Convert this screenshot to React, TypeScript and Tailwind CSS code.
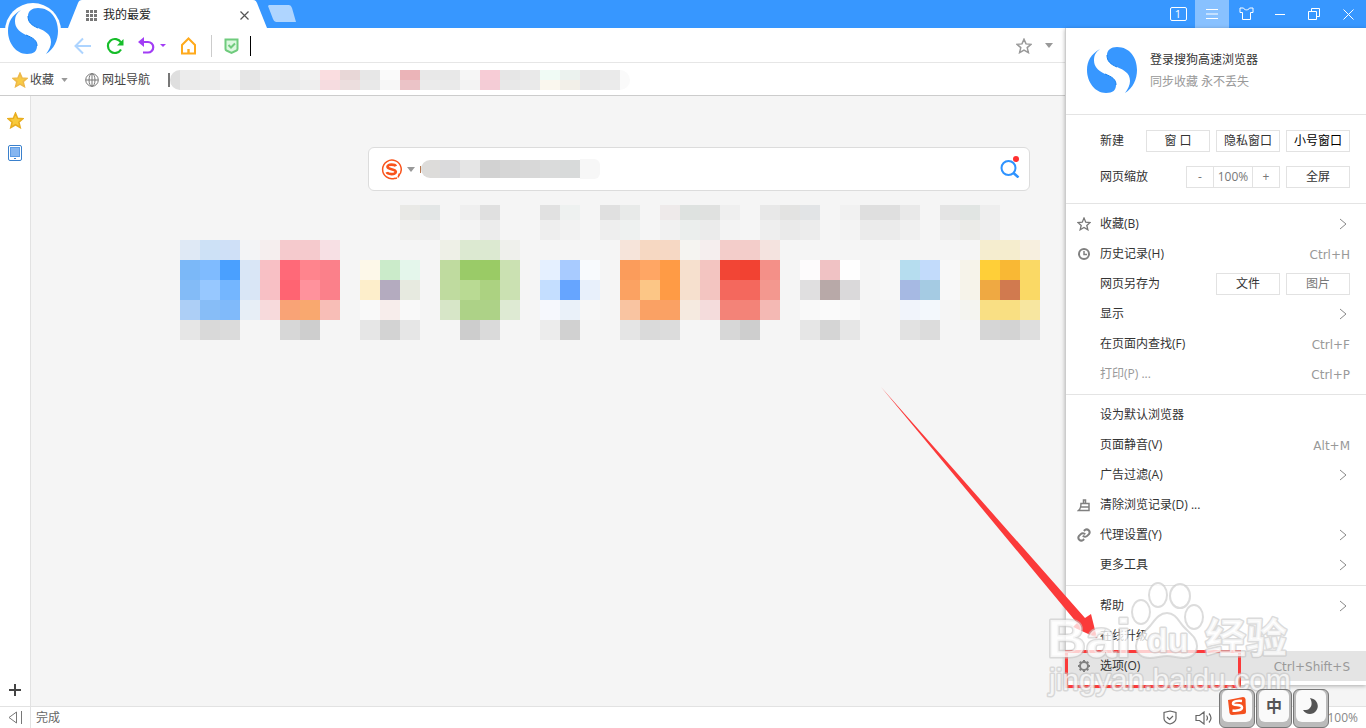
import type { ReactNode } from "react";

const tileRows = [
  "dfe9f5 cde1f6 cfe0f7 f3f4f6 f5eeee f5cacd f5cacd f7e0e4 . . . . . eef0e7 dce9d1 dce9d1 eff0ec . . . . . f6e4da f6d8c2 f6d8c4 f5f4f1 f5eeee f3cdca f3cdca f4e3df . . . . . . . . . . f5edcf f5edce f7efdf",
  "7bb8f8 7fbbff 4aa0ff d9e6f6 f8c0c5 ff6978 ff848d fb808a . fdf8e9 cbebca e4f6eb . bfdb9f 9acb68 9acb65 cbe1b2 . e5f0ff a8cbff f8fafd . fb9c5b ffa664 ff9b45 f6e0ce f3c5c1 f24535 f24232 f49088 . fdfbfc f0c2c4 fefefe . f7f7f7 b6ddef c2dbfb f8f8f8 f6f3ea ffcf38 f9b834 fad965",
  "83bbf7 97c8ff 74b6ff d9e6f6 f8c0c5 ff6472 ff929c fb808a . fdeecb b4abbf e7eae0 . bfdb9f b9da93 acd281 cbe1b2 . c4deff 66a5ff e8f0fb . fba262 fcc686 ff9b45 f6e0ce f3c5c1 f4685d f4685d f3988f . e0dfe0 b8a9a8 dad9da . f7f7f7 a6b9e3 a5cbe3 f8f8f8 f6f3ea efa942 d17a4f fad965",
  "adcff6 87bdf7 80bafa e7eef6 f7dadc f9a376 f9a86f f8beb7 . f9f9f9 f7edeb f9f9f9 . d7e6c8 add287 add287 deead3 . f6f8fd eaf1f9 f7f7f7 . f9c4a1 faa164 faa164 f5eae0 f4dcdc f38378 f38378 f4b9b4 . f9f9f9 fafafa f9f9f9 . . f1f4fb f3f8fc . f4f4f0 f9df84 f9df82 f7e6a0",
  "e6e6e6 d9d9d9 dbdbdb . . d7d7d7 cecece . . e6e6e6 d3d3d3 e6e6e6 . . cdcdcd dadada . . ececec d1d1d1 . . e5e5e5 dadada dcdcdc . . d7d7d7 cecece . . e6e6e6 d5d5d5 e6e6e6 . . e2e2e2 dcdcdc . . d6d6d6 d3d3d3 dedede",
];

const linkRows = [
  "e9e9e6 e3e6e6 . efefef e0e0e0 . . e1e1e1 eef1f0 . e0e0e0 e8eae9 . eeeaea dee2e0 e0e1e0 efefef . e8e8e8 e3e3e2 e2e4e6 . f1f1f1 dfdfdf dfdfdf e9e9e9 . e4e4e4 e1e5e3 eeeeee",
  "f0f0ee efefef . f3f3f3 ececec . . eeeeee f2f2f2 . eeeeee eef1f0 . f1f1f1 ebeeed ebebeb f3f3f3 . eeeeee eaeaea ececec . f3f3f3 ebebeb ebebeb f0f0f0 . eeeeee ebebe8 eeeeee",
];

const bookmarkRows = [
  "ececec eeeeee f8f8f8 e6e6e6 eeeeee ececec f1f1f1 fadde0 e8d7d7 e7e7e7 fafafa ebb4b8 e8e8e8 e8e8e8 f6f6f6 f7ccd6 e6e6e6 e9e9e9 f0fbf5 ebf2ee e9e9e9 eaeaea",
  "ebebeb ededed f1f1f1 e6e6e6 ebebeb ebebeb eeeeee f6dce0 ecdede e9e9e9 f7f7f7 ebc3c7 ebebeb eaeaea f3f3f3 f4ccd6 e8e8e8 eaeaea faf7ee f2efe8 e9e9e9 ebebeb",
];

function Cells({ row, size }: { row: string; size: string }) {
  return (
    <div className="flex">
      {row.split(" ").map((c, i) => (
        <span key={i} className={`shrink-0 ${size}`} style={{ backgroundColor: c === "." ? "transparent" : `#${c}` }} />
      ))}
    </div>
  );
}

function Logo() {
  return (
    <svg width="50" height="46" viewBox="0 0 50 46" fill="#3797ff">
      <path d="M13 2C4 7 0 14 0 23c0 12 8 23 19 23 7 0 10-3 10-8 0-6-4-8-11-11C10 23 7 19 7 13c0-5 2-8 6-11z" />
      <path d="M30 0c13 0 20 11 20 23 0 9-4 18-12 23 3-4 5-8 5-12 0-8-6-11-13-14-7-3-10-6-10-12 0-5 4-8 10-8z" />
      <path d="M20 8c0 6 3 9 10 12M29 38c0-6-4-8-11-11" fill="none" stroke="#1580ef" />
    </svg>
  );
}

function Caret({ className }: { className: string }) {
  return (
    <svg width="8" height="5" viewBox="0 0 8 5" className={className}>
      <path d="M0 0h8L4 5z" fill="currentColor" />
    </svg>
  );
}

function Chevron() {
  return (
    <svg width="8" height="12" viewBox="0 0 8 12" fill="none" stroke="#888" className="mr-[3px]">
      <path d="M1 1l6 5-6 5" />
    </svg>
  );
}

function Star({ size, fill, stroke }: { size: number; fill: string; stroke: string }) {
  return (
    <svg width={size} height={size} viewBox="0 0 16 16" fill={fill} stroke={stroke} strokeWidth="1.5">
      <path d="M8 1.2l2 4.7 5 .4-3.800 3.300 1.200 5L8 12l-4.400 2.600 1.200-5L1 6.300l5-.4z" />
    </svg>
  );
}

const icons: Record<string, ReactNode> = {
  star: <Star size={14} fill="none" stroke="#777" />,
  clock: (
    <svg width="14" height="14" viewBox="0 0 14 14" fill="none" stroke="#808080" strokeWidth="2">
      <circle cx="7" cy="7" r="5" />
      <path d="M7 4v3.500h3" strokeWidth="1.500" />
    </svg>
  ),
  broom: (
    <svg width="14" height="14" viewBox="0 0 14 14" fill="none" stroke="#808080" strokeWidth="1.500">
      <path d="M6.500 5V2h2v3M4 5.500h8v7H1.500C3.500 11 4 9 4 5.500zM4 9h8" />
    </svg>
  ),
  link: (
    <svg width="14" height="14" viewBox="0 0 24 24" fill="none" stroke="#808080" strokeWidth="3.500">
      <path d="M10 13a5 5 0 0 0 7.500.5l3-3a5 5 0 0 0-7-7l-1.700 1.700" />
      <path d="M14 11a5 5 0 0 0-7.500-.5l-3 3a5 5 0 0 0 7 7l1.700-1.700" />
    </svg>
  ),
  gear: (
    <svg width="14" height="14" viewBox="0 0 14 14" fill="none" stroke="#808080">
      <circle cx="7" cy="7" r="4" strokeWidth="2" />
      <path d="M7 1v2M7 11v2M1 7h2M11 7h2M2.700 2.700l1.400 1.400M9.900 9.900l1.400 1.400M2.700 11.300l1.400-1.400M9.900 4.100l1.400-1.400" strokeWidth="2" />
    </svg>
  ),
};

type Item = {
  label: string;
  icon?: string;
  key?: string;
  more?: boolean;
  muted?: boolean;
  active?: boolean;
};

const saveGroup: Item[] = [
  { label: "显示", more: true },
  { label: "在页面内查找(F)", key: "Ctrl+F" },
  { label: "打印(P) ...", key: "Ctrl+P", muted: true },
];

const toolGroup: Item[] = [
  { label: "设为默认浏览器" },
  { label: "页面静音(V)", key: "Alt+M" },
  { label: "广告过滤(A)", more: true },
  { label: "清除浏览记录(D) ...", icon: "broom" },
  { label: "代理设置(Y)", icon: "link", more: true },
  { label: "更多工具", more: true },
];

const helpGroup: Item[] = [
  { label: "帮助", more: true },
  { label: "在线升级" },
  { label: "选项(O)", icon: "gear", key: "Ctrl+Shift+S", active: true },
];

function MenuItem({ item }: { item: Item }) {
  return (
    <button className={`flex h-[30px] w-full items-center pr-4 pl-[11px] ${item.active ? "bg-[#e4e4e4]" : ""}`}>
      <span className="mr-[9px] w-[14px]">{item.icon && icons[item.icon]}</span>
      <span className={item.muted ? "text-[#999]" : "text-[#333]"}>{item.label}</span>
      <span className="ml-auto pt-px font-['DejaVu_Sans',sans-serif] text-[#999]">{item.key}</span>
      {item.more && <Chevron />}
    </button>
  );
}

function BoxButton({ children, className = "" }: { children: ReactNode; className?: string }) {
  return <button className={`h-[22px] w-16 border border-[#e2e2e2] leading-5 whitespace-pre ${className}`}>{children}</button>;
}

function Menu() {
  return (
    <div className="absolute top-7 right-0 w-[301px] border-l border-[#ccc] bg-white pb-1 shadow-[0_1px_4px_rgba(0,0,0,0.3)]">
      <a href="#login" className="flex h-[87px] items-center border-b border-[#e4e4e4] pb-[2px] pl-[21px]">
        <Logo />
        <span className="ml-[13px] flex flex-col gap-1">
          <span className="leading-5 text-[#333]">登录搜狗高速浏览器</span>
          <span className="leading-4 text-[#999]">同步收藏 永不丢失</span>
        </span>
      </a>

      <div className="flex flex-col gap-[14px] border-b border-[#e4e4e4] py-[15px] pr-4 pl-[34px]">
        <div className="flex items-center gap-[6px]">
          <span className="mr-auto">新建</span>
          <BoxButton>窗 口</BoxButton>
          <BoxButton>隐私窗口</BoxButton>
          <BoxButton className="text-black">小号窗口</BoxButton>
        </div>
        <div className="flex items-center gap-[6px]">
          <span className="mr-auto">网页缩放</span>
          <div className="flex h-[22px] w-[94px] border border-[#e2e2e2] text-[#777]">
            <button aria-label="缩小" className="flex-1 leading-5">-</button>
            <span className="w-10 border-x border-[#e2e2e2] text-center leading-5">100%</span>
            <button aria-label="放大" className="flex-1 leading-5">+</button>
          </div>
          <BoxButton>全屏</BoxButton>
        </div>
      </div>

      <div className="border-b border-[#e4e4e4] py-[5px]">
        <MenuItem item={{ label: "收藏(B)", icon: "star", more: true }} />
        <MenuItem item={{ label: "历史记录(H)", icon: "clock", key: "Ctrl+H" }} />
        <div className="flex h-[30px] items-center gap-[6px] pr-4 pl-[34px]">
          <span className="mr-auto">网页另存为</span>
          <BoxButton>文件</BoxButton>
          <BoxButton className="text-[#777]">图片</BoxButton>
        </div>
        {saveGroup.map((item) => (
          <MenuItem key={item.label} item={item} />
        ))}
      </div>

      <div className="border-b border-[#e4e4e4] py-[5px]">
        {toolGroup.map((item) => (
          <MenuItem key={item.label} item={item} />
        ))}
      </div>

      <div className="pt-[5px]">
        {helpGroup.map((item) => (
          <MenuItem key={item.label} item={item} />
        ))}
      </div>
    </div>
  );
}

function TitleBar() {
  return (
    <header className="flex h-7 bg-[#3797ff] pl-[68px]">
      <div className="relative flex h-7 w-[200px] items-center pt-[2px] pr-[19px] pl-[18px]">
        <svg className="absolute inset-0 h-full w-full" viewBox="0 0 200 28" preserveAspectRatio="none">
          <path d="M0 28L10 3q1-3 4-3h171q3 0 4 3l10 25z" fill="#fff" />
        </svg>
        <svg width="11" height="11" viewBox="0 0 11 11" className="relative" fill="#777">
          {[0, 4, 8].map((y) => [0, 4, 8].map((x) => <rect key={`${x}-${y}`} x={x} y={y} width="3" height="3" />))}
        </svg>
        <span className="relative ml-[6px] text-[#222]">我的最爱</span>
        <button aria-label="关闭标签" className="relative ml-auto">
          <svg width="9" height="9" viewBox="0 0 9 9" stroke="#555" strokeWidth="1.200">
            <path d="M.5.5l8 8M8.500.5l-8 8" />
          </svg>
        </button>
      </div>
      <button aria-label="新建标签" className="self-start pt-[5px]">
        <svg width="28" height="17" viewBox="0 0 28 17">
          <path d="M1 0h20q2 0 3 3l4 14H8q-2 0-3-3L0 1z" fill="#afd5ff" />
        </svg>
      </button>
      <div className="ml-auto flex pr-px text-white">
        <button className="flex w-[34px] items-center justify-center">
          <span className="h-[14px] w-[17px] rounded-[2px] border border-white text-[11px] leading-3">1</span>
        </button>
        <button aria-label="菜单" className="flex w-[34px] items-center justify-center bg-[#88c1ff]">
          <svg width="12" height="10" viewBox="0 0 12 10" stroke="#fff">
            <path d="M0 .5h12M0 5h12M0 9.500h12" />
          </svg>
        </button>
        <button aria-label="皮肤" className="flex w-[34px] items-center justify-center">
          <svg width="15" height="14" viewBox="0 0 15 14" fill="none" stroke="#fff">
            <path d="M4.500 1H1v4.500h2.500v7h8v-7H14V1h-3.500c-1 2.500-5 2.500-6 0z" />
          </svg>
        </button>
        <button aria-label="最小化" className="flex w-[34px] items-center justify-center">
          <span className="h-px w-[10px] bg-white" />
        </button>
        <button aria-label="还原" className="flex w-[34px] items-center justify-center">
          <svg width="12" height="12" viewBox="0 0 12 12" fill="none" stroke="#fff">
            <path d="M.5 3.500h8v8h-8zM3.500 3V.5h8v8H9" />
          </svg>
        </button>
        <button aria-label="关闭" className="flex w-[34px] items-center justify-center">
          <svg width="11" height="11" viewBox="0 0 11 11" stroke="#fff">
            <path d="M.5.5l10 10M10.500.5l-10 10" />
          </svg>
        </button>
      </div>
    </header>
  );
}

function Toolbar() {
  return (
    <div className="flex h-[35px] items-center border-b border-[#e6e6e6] bg-white pt-px pl-[74px]">
      <button aria-label="后退" className="mr-[14px]">
        <svg width="18" height="18" viewBox="0 0 18 18" fill="none" stroke="#add4ff" strokeWidth="2">
          <path d="M17 9H2M9 1.500L1.500 9 9 16.500" />
        </svg>
      </button>
      <button aria-label="刷新" className="mr-[14px]">
        <svg width="18" height="18" viewBox="0 0 18 18" fill="none" stroke="#16bd2a" strokeWidth="2.200">
          <path d="M15 12.500A7 7 0 1 1 15 5.500" />
          <path d="M17.500 2v6.500H11z" fill="#16bd2a" stroke="none" />
        </svg>
      </button>
      <button aria-label="恢复" className="flex items-center text-[#a23df5]">
        <svg width="17" height="18" viewBox="0 0 17 18" fill="none" stroke="#a23df5" strokeWidth="2.200">
          <path d="M4 5h6a5 5 0 0 1 0 10.500H5" />
          <path d="M0 5l6-5v10z" fill="#a23df5" stroke="none" />
        </svg>
        <svg width="6" height="3" viewBox="0 0 6 3" className="ml-[5px]">
          <path d="M0 0h6L3 3z" fill="currentColor" />
        </svg>
      </button>
      <button aria-label="主页" className="ml-[14px]">
        <svg width="17" height="18" viewBox="0 0 17 18" fill="none" stroke="#ffaa1c" strokeWidth="2">
          <path d="M2 8l6.500-6.500L15 8v8.500H2z" />
          <path d="M7.300 12h2.400v5H7.300z" fill="#ffaa1c" stroke="none" />
        </svg>
      </button>
      <span className="mr-3 ml-[14px] h-[22px] w-px bg-[#ccc]" />
      <svg width="15" height="16" viewBox="0 0 15 16" fill="#dcf8e0" stroke="#6fcb7d" strokeWidth="2">
        <path d="M1.500 1.500h12v9.500q0 1-1 1.500l-5 2.300-5-2.300q-1-.5-1-1.500z" />
        <path d="M4.500 7l2.500 2.500 4-4" fill="none" />
      </svg>
      <span className="mr-1 ml-[11px] h-5 w-px bg-black" />
      <input aria-label="地址栏" className="h-6 min-w-0 flex-1 outline-none" />
      <div className="mr-[313px] flex items-center gap-[13px] text-[#999]">
        <button aria-label="添加收藏">
          <Star size={16} fill="none" stroke="#999" />
        </button>
        <button aria-label="收藏选项">
          <Caret className="" />
        </button>
      </div>
    </div>
  );
}

function Bookmarks() {
  return (
    <nav className="flex h-[33px] items-center border-b border-[#ccc] bg-white pt-px pl-3 text-[#444]">
      <a href="#favorites" className="flex items-center gap-[2px]">
        <Star size={16} fill="#f8cb45" stroke="#edb84a" />
        收藏
      </a>
      <Caret className="ml-[7px] h-1 w-[7px] text-[#999]" />
      <a href="#sites" className="ml-[17px] flex items-center gap-[3px]">
        <svg width="14" height="14" viewBox="0 0 14 14" fill="none" stroke="#777">
          <circle cx="7" cy="7" r="6.300" />
          <ellipse cx="7" cy="7" rx="3" ry="6.300" />
          <path d="M1 7h12M7 1v12" />
        </svg>
        网址导航
      </a>
      <div className="ml-[18px] flex h-5 items-center">
        <span className="h-[14px] w-[2px] bg-[#777]" />
        <span className="h-5 w-[10px] rounded-l-full bg-[#dfdfdf]" />
        <div>
          {bookmarkRows.map((row, i) => (
            <Cells key={i} row={row} size="h-[10px] w-5" />
          ))}
        </div>
        <span className="h-5 w-[10px] rounded-r-full bg-[#fafafa]" />
      </div>
    </nav>
  );
}

function StartPage() {
  return (
    <main className="min-w-0 flex-1 overflow-hidden bg-[#f5f5f5] pt-[51px]">
      <div className="mx-auto flex h-11 max-w-[662px] items-center rounded-md border border-[#dcdcdc] bg-white pr-[9px] pl-3">
        <svg width="21" height="21" viewBox="0 0 21 21" fill="none" stroke="#f9541c">
          <path d="M17.500 17A9.300 9.300 0 1 0 14 19.200" strokeWidth="1.500" />
          <path d="M14.800 7.200c-.8-1.800-8.300-2.500-8.300.6 0 3 8.300 1.800 8.300 5 0 3.400-8.300 2.600-9 .4" strokeWidth="2.700" />
          <path d="M18.500 14.500l-1.500 4M14 19.500l2-.5" strokeWidth="1.500" />
        </svg>
        <button aria-label="选择搜索引擎" className="ml-[5px]">
          <Caret className="text-[#999]" />
        </button>
        <div className="ml-[5px] flex shrink-0 items-center">
          <span className="h-[7px] w-px bg-[#b87850]" />
          <span className="h-[18px] w-[19px] rounded-l-full bg-[#dddcda]" />
          <Cells row="dadadc e5e5e5 d2d2d2 d6d6d6 d8d8d8 dadbdb d8dada" size="h-[18px] w-5" />
          <span className="h-5 w-5 rounded-r-md bg-[#f7f7f7]" />
        </div>
        <input aria-label="搜索" className="h-8 min-w-0 flex-1 outline-none" />
        <button aria-label="搜索" className="self-start pt-[7px]">
          <svg width="20" height="23" viewBox="0 0 20 23" fill="none" stroke="#2e93ff" strokeWidth="2">
            <circle cx="8.500" cy="13" r="7" />
            <path d="M13.500 18l5 4.500" strokeWidth="2.500" />
            <circle cx="16" cy="4" r="3" fill="#ff3030" stroke="none" />
          </svg>
        </button>
      </div>

      <div className="mx-auto max-w-[1037px] pt-[14px]">
        <div className="pl-[220px]">
          <Cells row={linkRows[0]} size="h-[15px] w-5" />
          <Cells row={linkRows[1]} size="h-5 w-5" />
        </div>
        {tileRows.map((row, i) => (
          <Cells key={i} row={row} size="h-5 w-5" />
        ))}
      </div>
    </main>
  );
}

function SideBar() {
  return (
    <aside className="flex w-[31px] shrink-0 flex-col items-center border-r border-[#e2e2e2] bg-white pt-4 pb-[10px]">
      <button aria-label="收藏夹">
        <Star size={17} fill="#f8ca3c" stroke="#e9ae20" />
      </button>
      <button aria-label="手机" className="mt-4">
        <svg width="14" height="16" viewBox="0 0 14 16" fill="#fff" stroke="#3a80cc">
          <rect x=".5" y=".5" width="13" height="15" rx="1.500" />
          <rect x="2.500" y="2.500" width="9" height="9" fill="#86b6f0" stroke="#5c9be4" />
          <path d="M6 13.500h2" />
        </svg>
      </button>
      <button aria-label="添加" className="mt-auto">
        <svg width="12" height="12" viewBox="0 0 12 12" stroke="#444" strokeWidth="2">
          <path d="M6 0v12M0 6h12" />
        </svg>
      </button>
    </aside>
  );
}

function StatusBar() {
  return (
    <footer className="flex h-[22px] items-center border-t border-[#e2e2e2] bg-white text-[#666]">
      <button aria-label="收起侧栏" className="flex h-full w-[31px] items-center justify-center border-r border-[#e2e2e2]">
        <svg width="15" height="13" viewBox="0 0 15 13" fill="none" stroke="#777">
          <path d="M8.500 1v11L1 6.500zM13.500 0v13" />
        </svg>
      </button>
      <span className="ml-[5px]">完成</span>
      <div className="ml-auto flex items-center pr-2">
        <svg width="14" height="15" viewBox="0 0 14 15" fill="none" stroke="#666" strokeWidth="1.200">
          <path d="M7 1l6 1.500v6c0 3-3 4.500-6 5.500-3-1-6-2.500-6-5.500v-6z" />
          <path d="M4 7l2.500 2.500L10 6" />
        </svg>
        <svg width="18" height="14" viewBox="0 0 18 14" fill="none" stroke="#666" strokeWidth="1.200" className="mr-[114px] ml-[18px]">
          <path d="M1 4.500h3.500L9 1v12L4.500 9.500H1zM11.500 4.500q2 2.500 0 5M14 2.500q4 4.500 0 9" />
        </svg>
        <span className="text-[#888]">100%</span>
      </div>
    </footer>
  );
}

function Keycap({ label, children }: { label: string; children: ReactNode }) {
  return (
    <button
      aria-label={label}
      className="flex h-[39px] w-9 items-start justify-center rounded-md border border-[#777] bg-[#bbb] px-[2px]"
    >
      <span className="flex h-8 w-full items-center justify-center rounded-md bg-[#fafafa]">{children}</span>
    </button>
  );
}

function InputMethod() {
  return (
    <div className="absolute right-[37px] bottom-0 flex gap-px">
      <Keycap label="搜狗输入法">
        <svg width="20" height="20" viewBox="0 0 20 20">
          <path d="M1 4l15-3q2 0 2.500 2L19 16q0 2-2 2L5 19q-2 0-2.500-2z" fill="#f4501e" />
          <path d="M15 5c-4-.5-9 0-9 2.500 0 3 9 0 9 4 0 3-6 3.500-9.500 3" fill="none" stroke="#fff" strokeWidth="2.500" />
        </svg>
      </Keycap>
      <Keycap label="中文">
        <span className="text-base font-bold text-[#555]">中</span>
      </Keycap>
      <Keycap label="半角">
        <svg width="16" height="16" viewBox="0 0 16 16">
          <path d="M7 0c7 1 10 8 6 13-3 4-10 4-13-1 7 1 11-5 7-12z" fill="#555" />
        </svg>
      </Keycap>
    </div>
  );
}

// Callout arrow, highlight box and watermark drawn over the page
function Annotations() {
  return (
    <svg width="500" height="350" viewBox="866 378 500 350" className="pointer-events-none absolute top-[378px] right-0">
      <path d="M881 387l204 231 6-4 6 24-24-11 4-4z" fill="#fb3a3a" />
      <rect x="1066.500" y="651.500" width="173" height="35" fill="none" stroke="#fb3a3a" strokeWidth="3" />
      <g
        fill="#fff"
        fillOpacity=".75"
        stroke="#c4c4c4"
        strokeOpacity=".6"
        strokeWidth="2"
        strokeLinejoin="round"
        className="font-['Liberation_Sans','Noto_Sans_CJK_SC',sans-serif]"
      >
        <ellipse cx="1141" cy="612" rx="9" ry="12" />
        <ellipse cx="1158" cy="595" rx="9" ry="12" />
        <ellipse cx="1180" cy="596" rx="10" ry="12" />
        <ellipse cx="1194" cy="617" rx="9" ry="12" />
        <path d="M1167 613c8 0 11 7 16 13 6 7 14 11 14 20 0 8-6 12-13 12-6 0-11-2-17-2s-11 2-17 2c-8 0-14-4-14-12 0-9 8-13 14-20 5-6 9-13 17-13z" />
        <g paintOrder="stroke" strokeWidth="3">
          <text x="1047" y="657" fontSize="54" fontWeight="700">Bai</text>
          <text x="1147" y="652" fontSize="34" fontWeight="700">du</text>
          <text x="1205" y="653" fontSize="41" fontWeight="700">经验</text>
          <text x="1049" y="690" fontSize="30">jingyan.baidu.com</text>
        </g>
      </g>
    </svg>
  );
}

export default function App() {
  return (
    <div className="relative flex h-screen flex-col overflow-hidden font-['Open_Sans','Noto_Sans_CJK_SC',sans-serif] text-xs text-[#333]">
      <TitleBar />
      <Toolbar />
      <Bookmarks />
      <div className="flex min-h-0 flex-1">
        <SideBar />
        <StartPage />
      </div>
      <StatusBar />
      <div className="absolute top-[3px] left-[5px] flex h-14 w-14 justify-center rounded-full bg-white pt-[5px]">
        <Logo />
      </div>
      <Menu />
      <Annotations />
      <InputMethod />
    </div>
  );
}
